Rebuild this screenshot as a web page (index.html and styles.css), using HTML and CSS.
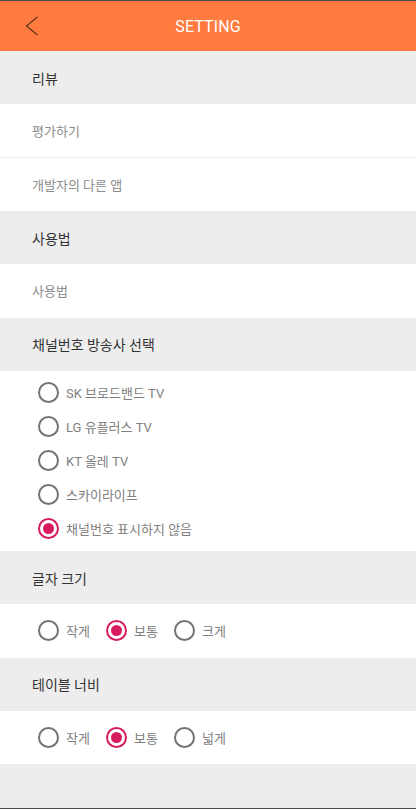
FILE: index.html
```html
<!DOCTYPE html>
<html lang="ko">
<head>
<meta charset="utf-8">
<title>SETTING</title>
<link rel="stylesheet" href="styles.css">
</head>
<body>
<div class="screen">
  <header class="appbar">
    <button class="back" aria-label="back">
      <svg width="14" height="20" viewBox="0 0 14 20"><path d="M12.5 1 L1.5 10 L12.5 19" fill="none" stroke="#5b3418" stroke-width="1.2"/></svg>
    </button>
    <h1 class="title">SETTING</h1>
  </header>

  <div class="section">리뷰</div>
  <div class="item">평가하기</div>
  <div class="divider"></div>
  <div class="item">개발자의 다른 앱</div>

  <div class="section">사용법</div>
  <div class="item">사용법</div>

  <div class="section">채널번호 방송사 선택</div>
  <div class="radio-list">
    <label class="radio"><span class="dot"></span><span class="label">SK 브로드밴드 TV</span></label>
    <label class="radio"><span class="dot"></span><span class="label">LG 유플러스 TV</span></label>
    <label class="radio"><span class="dot"></span><span class="label">KT 올레 TV</span></label>
    <label class="radio"><span class="dot"></span><span class="label">스카이라이프</span></label>
    <label class="radio checked"><span class="dot"></span><span class="label">채널번호 표시하지 않음</span></label>
  </div>

  <div class="section">글자 크기</div>
  <div class="radio-row">
    <label class="radio"><span class="dot"></span><span class="label">작게</span></label>
    <label class="radio checked"><span class="dot"></span><span class="label">보통</span></label>
    <label class="radio"><span class="dot"></span><span class="label">크게</span></label>
  </div>

  <div class="section">테이블 너비</div>
  <div class="radio-row">
    <label class="radio"><span class="dot"></span><span class="label">작게</span></label>
    <label class="radio checked"><span class="dot"></span><span class="label">보통</span></label>
    <label class="radio"><span class="dot"></span><span class="label">넓게</span></label>
  </div>

  <div class="filler"></div>
</div>
</body>
</html>
```

FILE: styles.css
```css
* { box-sizing: border-box; }
html, body { margin: 0; padding: 0; height: 100%; }
body {
  font-family: Roboto, "Noto Sans CJK KR", "Noto Sans", sans-serif;
  background: #ededed;
}
.screen {
  width: 416px;
  height: 809px;
  display: flex;
  flex-direction: column;
  background: #ededed;
  border-top: 1px solid #4a4a4a;
  border-bottom: 1px solid #4a4a4a;
}
.appbar {
  height: 50px;
  flex: none;
  background: #ff7b3f;
  display: flex;
  align-items: center;
  justify-content: center;
  position: relative;
}
.back {
  position: absolute;
  left: 25px;
  top: 15px;
  width: 14px;
  height: 20px;
  padding: 0;
  border: 0;
  background: none;
  display: flex;
}
.title {
  margin: 0;
  font-family: Roboto, sans-serif;
  font-weight: 400;
  font-size: 16px;
  color: #ffffff;
  letter-spacing: 0.1px;
}
.section {
  height: 53.33px;
  flex: none;
  display: flex;
  align-items: center;
  padding-left: 32px;
  font-size: 14px;
  color: #333333;
  background: #ededed;
}
.item {
  height: 53.33px;
  flex: none;
  display: flex;
  align-items: center;
  padding-left: 32px;
  font-size: 13px;
  color: #8c8c8c;
  background: #ffffff;
}
.divider {
  height: 1px;
  margin-top: -1px;
  background: #ececec;
  position: relative;
}
.radio-list {
  flex: none;
  height: 180px;
  background: #ffffff;
  padding: 5px 0 5px 38px;
  display: flex;
  flex-direction: column;
}
.radio-list .radio { height: 34px; }
.radio {
  display: flex;
  align-items: center;
  gap: 7px;
}
.dot {
  width: 21px;
  height: 21px;
  border-radius: 50%;
  border: 2px solid #737373;
  flex: none;
  display: flex;
  align-items: center;
  justify-content: center;
}
.radio.checked .dot { border-color: #d81b60; }
.radio.checked .dot::after {
  content: "";
  width: 11px;
  height: 11px;
  border-radius: 50%;
  background: #d81b60;
}
.label {
  font-size: 13px;
  color: #808080;
}
.radio-row {
  height: 53.33px;
  flex: none;
  background: #ffffff;
  display: flex;
  align-items: center;
  padding-left: 38px;
}
.radio-row .radio { width: 68px; }
.filler { flex: 1; background: #ededed; }
```
